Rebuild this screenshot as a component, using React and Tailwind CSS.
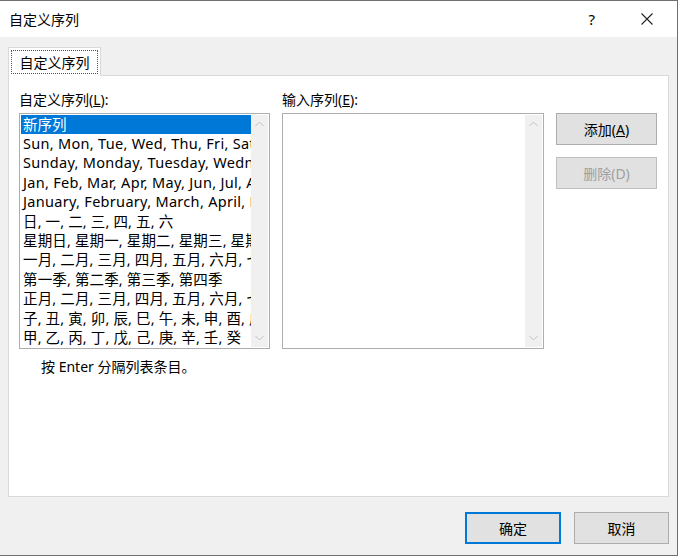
import React from 'react';

const font = "font-['Noto_Sans','Noto_Sans_CJK_SC',sans-serif]";

const items = [
  { t: 'Sun, Mon, Tue, Wed, Thu, Fri, Sat', latin: true },
  { t: 'Sunday, Monday, Tuesday, Wednesday, Thursday', latin: true },
  { t: 'Jan, Feb, Mar, Apr, May, Jun, Jul, Aug', latin: true },
  { t: 'January, February, March, April, May', latin: true },
  { t: '日, 一, 二, 三, 四, 五, 六' },
  { t: '星期日, 星期一, 星期二, 星期三, 星期四' },
  { t: '一月, 二月, 三月, 四月, 五月, 六月, 七月' },
  { t: '第一季, 第二季, 第三季, 第四季' },
  { t: '正月, 二月, 三月, 四月, 五月, 六月, 七月' },
  { t: '子, 丑, 寅, 卯, 辰, 巳, 午, 未, 申, 酉, 戌' },
  { t: '甲, 乙, 丙, 丁, 戊, 己, 庚, 辛, 壬, 癸' },
];

function Chevron({ up }) {
  return (
    <svg width="9" height="6" viewBox="0 0 9 6" fill="none" stroke="#c2c2c2" strokeWidth="1">
      {up ? <path d="M0.5 5 L4.5 1 L8.5 5" /> : <path d="M0.5 1 L4.5 5 L8.5 1" />}
    </svg>
  );
}

function ScrollBar() {
  return (
    <div className="w-[17px] h-full bg-[#f0f0f0] flex flex-col items-center justify-between py-[6px] shrink-0">
      <Chevron up />
      <Chevron />
    </div>
  );
}

function Btn({ children, disabled, primary, className = '' }) {
  return (
    <div
      className={`flex items-center justify-center bg-[#e1e1e1] text-[14px] ${
        primary ? 'border-2 border-[#0078d7]' : disabled ? 'border border-[#bfbfbf]' : 'border border-[#adadad]'
      } ${disabled ? 'text-[#a0a0a0]' : 'text-black'} ${className}`}
    >
      {children}
    </div>
  );
}

export default function App() {
  return (
    <div className={`w-[678px] h-[556px] bg-[#f0f0f0] border-r border-b border-t border-[#6f6f6f] flex flex-col ${font} text-black`}>
      <div className="h-[36px] bg-white flex items-center pl-[9px] pr-[24px] shrink-0">
        <span className="text-[14px]">自定义序列</span>
        <span className="ml-auto text-[15px] mr-[46px]">?</span>
        <svg width="12" height="12" viewBox="0 0 12 12" stroke="#222" strokeWidth="1.1">
          <path d="M0.5 0.5 L11.5 11.5 M11.5 0.5 L0.5 11.5" />
        </svg>
      </div>

      <div className="flex flex-col px-[8px] pt-[10px]">
        <div className="flex">
          <div className="w-[93px] h-[29px] bg-white border border-b-0 border-[#d9d9d9] p-[2px] relative z-10 -mb-px">
            <div className="w-full h-full border border-dotted border-[#555] flex items-center justify-center text-[14px]">
              自定义序列
            </div>
          </div>
        </div>
        <div className="h-[422px] bg-white border border-[#d9d9d9] pl-[10px] pr-[11px] pt-[14px] flex flex-col">
          <div className="flex gap-[12px]">
            <div className="flex flex-col w-[251px]">
              <div className="text-[14px] leading-[20px] h-[23px]">
                自定义序列(<span className="underline">L</span>):
              </div>
              <div className="h-[236px] border border-[#adadad] flex p-px">
                <div className="flex-1 min-w-0 overflow-hidden text-[14.5px] leading-[19.4px] whitespace-nowrap">
                  <div className="bg-[#0078d7] text-white px-[2px] h-[19px]">新序列</div>
                  {items.map(({ t, latin }) => (
                    <div key={t} className={`px-[2px] overflow-hidden ${latin ? 'tracking-[0.3px]' : 'tracking-[0.15px]'}`}>
                      {t}
                    </div>
                  ))}
                </div>
                <ScrollBar />
              </div>
            </div>
            <div className="flex flex-col w-[263px]">
              <div className="text-[14px] leading-[20px] h-[23px]">
                输入序列(<span className="underline">E</span>):
              </div>
              <div className="h-[236px] border border-[#adadad] flex justify-end p-px">
                <ScrollBar />
              </div>
            </div>
            <div className="flex flex-col pt-[23px] gap-[12px]">
              <Btn className="w-[101px] h-[32px]">
                添加(<span className="underline">A</span>)
              </Btn>
              <Btn disabled className="w-[101px] h-[32px]">
                删除(D)
              </Btn>
            </div>
          </div>
          <div className="text-[14px] leading-[20px] pl-[22px] mt-[8px]">按 Enter 分隔列表条目。</div>
        </div>
      </div>

      <div className="flex justify-end gap-[13px] pr-[8px] pt-[15px]">
        <Btn primary className="w-[96px] h-[32px]">确定</Btn>
        <Btn className="w-[95px] h-[32px]">取消</Btn>
      </div>
    </div>
  );
}
